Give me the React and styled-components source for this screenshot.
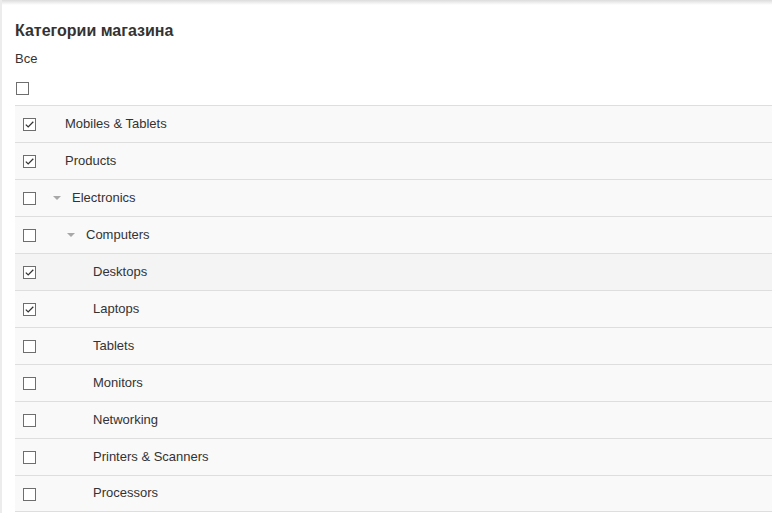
import styled, { createGlobalStyle } from "styled-components";

const Global = createGlobalStyle`
  html, body {
    margin: 0;
    padding: 0;
    background: #fff;
  }
  body {
    font-family: "Liberation Sans", Arial, sans-serif;
    color: #333;
  }
`;

const Page = styled.div`
  position: relative;
  min-height: 513px;
  padding: 21px 0 0 13px;
  box-sizing: border-box;
  border-left: 2px solid #ececec;
  &::before {
    content: "";
    position: absolute;
    left: 0;
    right: 0;
    top: 0;
    height: 5px;
    background: linear-gradient(#dcdcdc, rgba(255, 255, 255, 0));
  }
`;

const Title = styled.h2`
  margin: 0;
  font-size: 16px;
  font-weight: bold;
  line-height: 20px;
  color: #333;
`;

const AllLabel = styled.div`
  margin-top: 10px;
  font-size: 13px;
  line-height: 16px;
  color: #333;
`;

const AllRow = styled.div`
  display: flex;
  align-items: flex-start;
  padding-top: 15px;
  height: 38px;
  box-sizing: border-box;
  padding-left: 1px;
`;

const Table = styled.div`
  display: flex;
  flex-direction: column;
`;

const Row = styled.div`
  display: flex;
  align-items: center;
  height: 37px;
  box-sizing: border-box;
  border-top: 1px solid #dedede;
  background: ${(p) => (p.$hover ? "#f4f4f4" : "#f9f9f9")};
  &:last-child {
    border-bottom: 1px solid #dedede;
  }
`;

const CheckCell = styled.div`
  width: 30px;
  padding-left: 8px;
  box-sizing: border-box;
  display: flex;
  align-items: center;
  padding-top: 1px;
`;

const Box = styled.span`
  display: inline-flex;
  align-items: center;
  justify-content: center;
  width: 13px;
  height: 13px;
  box-sizing: border-box;
  border: 1px solid #6e6e6e;
  background: #fff;
`;

const NameCell = styled.div`
  display: flex;
  align-items: center;
  font-size: 13px;
  color: #333;
  margin-top: -2px;
  padding-left: ${(p) => (p.$parent ? 14 * p.$level - 6 : 20 + 14 * p.$level)}px;
`;

const Caret = styled.span`
  width: 0;
  height: 0;
  border-left: 4px solid transparent;
  border-right: 4px solid transparent;
  border-top: 4px solid #a8a8a8;
  margin-right: 11px;
  margin-top: 2px;
`;

function Checkbox({ checked }) {
  return (
    <Box>
      {checked && (
        <svg width="9" height="7" viewBox="0 0 9 7">
          <path d="M0.8 3.6 L3.2 5.9 L8.3 0.8" fill="none" stroke="#333" strokeWidth="1.3" />
        </svg>
      )}
    </Box>
  );
}

const items = [
  { name: "Mobiles & Tablets", level: 0, checked: true },
  { name: "Products", level: 0, checked: true },
  { name: "Electronics", level: 1, parent: true },
  { name: "Computers", level: 2, parent: true },
  { name: "Desktops", level: 2, checked: true, hover: true },
  { name: "Laptops", level: 2, checked: true },
  { name: "Tablets", level: 2 },
  { name: "Monitors", level: 2 },
  { name: "Networking", level: 2 },
  { name: "Printers & Scanners", level: 2 },
  { name: "Processors", level: 2 },
];

export default function App() {
  return (
    <>
      <Global />
      <Page>
        <Title>Категории магазина</Title>
        <AllLabel>Все</AllLabel>
        <AllRow>
          <Checkbox />
        </AllRow>
        <Table>
          {items.map((it) => (
            <Row key={it.name} $hover={it.hover}>
              <CheckCell>
                <Checkbox checked={it.checked} />
              </CheckCell>
              <NameCell $level={it.level} $parent={it.parent}>
                {it.parent && <Caret />}
                {it.name}
              </NameCell>
            </Row>
          ))}
        </Table>
      </Page>
    </>
  );
}
